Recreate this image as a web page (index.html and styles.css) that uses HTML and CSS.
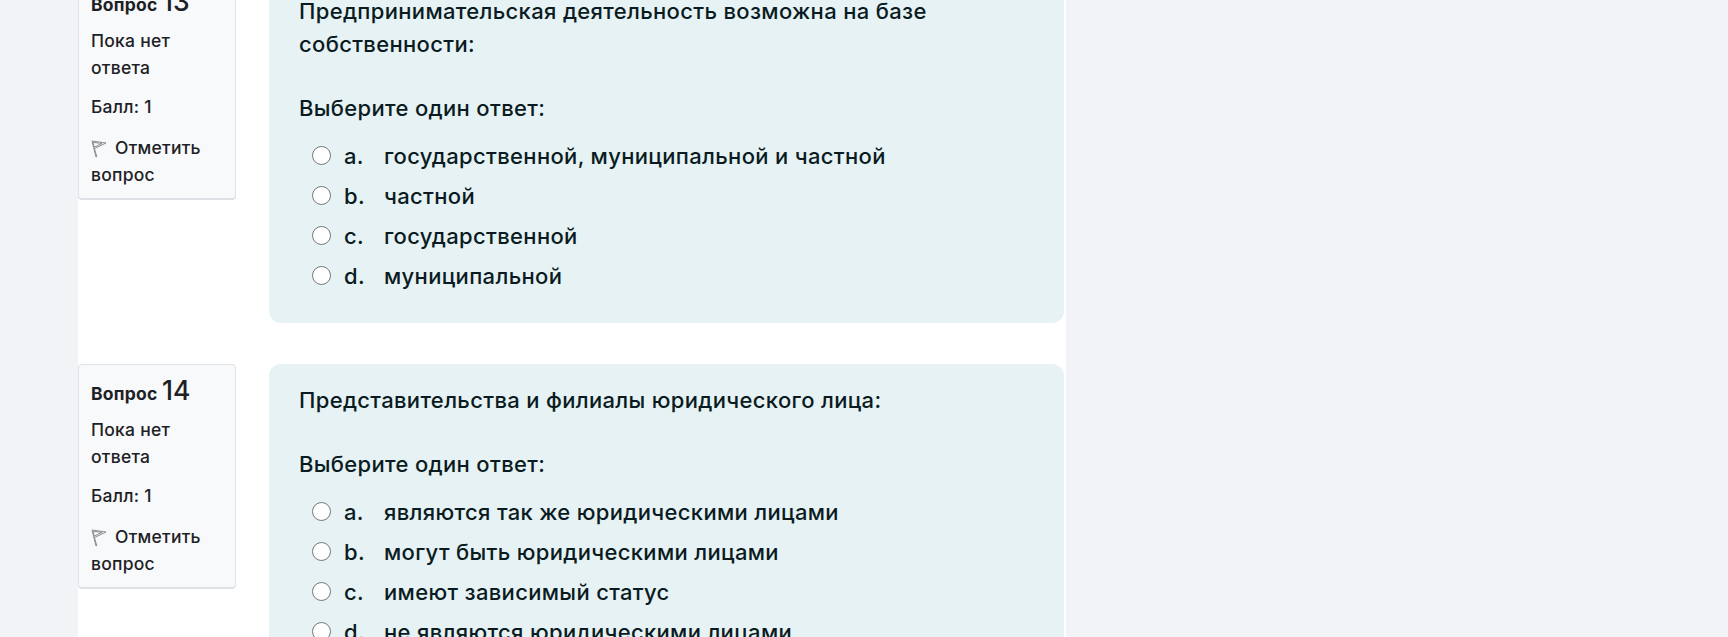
FILE: index.html
```html
<!DOCTYPE html>
<html lang="ru">
<head>
<meta charset="utf-8">
<title>Тест</title>
<link rel="stylesheet" href="styles.css">
</head>
<body>
<main class="panel">
  <section class="question first">
    <aside class="info">
      <h3 class="qno">Вопрос <span class="num">13</span></h3>
      <div class="state">Пока нет ответа</div>
      <div class="grade">Балл: 1</div>
      <div class="flag"><svg class="flag-icon" viewBox="0 0 16 18"><path d="M1 1 L5 17 L5.8 16.6 L3.4 8.6 L15 3 Z M2.2 2.4 L3.2 7.2 L11 3.4 Z" fill="none" stroke="#7d8287" stroke-width="0.9"/></svg>Отметить вопрос</div>
    </aside>
    <div class="content">
      <p class="qtext">Предпринимательская деятельность возможна на базе собственности:</p>
      <p class="prompt">Выберите один ответ:</p>
      <div class="answers">
        <label class="answer"><span class="radio"></span><span class="letter">a.</span><span>государственной, муниципальной и частной</span></label>
        <label class="answer"><span class="radio"></span><span class="letter">b.</span><span>частной</span></label>
        <label class="answer"><span class="radio"></span><span class="letter">c.</span><span>государственной</span></label>
        <label class="answer"><span class="radio"></span><span class="letter">d.</span><span>муниципальной</span></label>
      </div>
    </div>
  </section>
  <section class="question">
    <aside class="info">
      <h3 class="qno">Вопрос <span class="num">14</span></h3>
      <div class="state">Пока нет ответа</div>
      <div class="grade">Балл: 1</div>
      <div class="flag"><svg class="flag-icon" viewBox="0 0 16 18"><path d="M1 1 L5 17 L5.8 16.6 L3.4 8.6 L15 3 Z M2.2 2.4 L3.2 7.2 L11 3.4 Z" fill="none" stroke="#7d8287" stroke-width="0.9"/></svg>Отметить вопрос</div>
    </aside>
    <div class="content">
      <p class="qtext">Представительства и филиалы юридического лица:</p>
      <p class="prompt">Выберите один ответ:</p>
      <div class="answers">
        <label class="answer"><span class="radio"></span><span class="letter">a.</span><span>являются так же юридическими лицами</span></label>
        <label class="answer"><span class="radio"></span><span class="letter">b.</span><span>могут быть юридическими лицами</span></label>
        <label class="answer"><span class="radio"></span><span class="letter">c.</span><span>имеют зависимый статус</span></label>
        <label class="answer"><span class="radio"></span><span class="letter">d.</span><span>не являются юридическими лицами</span></label>
      </div>
    </div>
  </section>
</main>
</body>
</html>
```
FILE: styles.css
```css
* { box-sizing: border-box; }
html, body { margin: 0; height: 637px; overflow: hidden; }
body {
  background: #f1f3f7;
  font-family: "Inter", "Noto Sans", sans-serif;
  color: #1d2125;
}
.panel {
  margin-left: 78px;
  width: 988px;
  height: 637px;
  background: #fff;
  overflow: hidden;
}
.question {
  display: flex;
  align-items: flex-start;
  gap: 33px;
  margin-bottom: 41px;
}
.question.first { margin-top: -25px; }
.info {
  width: 158px;
  flex: none;
  padding: 12px 12px 10px;
  background: #f8f9fa;
  border: 1px solid #dee2e6;
  border-bottom-width: 2px;
  border-radius: 4px;
  font-size: 17.5px;
  font-weight: 450;
  line-height: 27px;
  letter-spacing: 0.25px;
}
.qno {
  margin: 0 0 9px;
  font-size: 17.5px;
  font-weight: 700;
  line-height: 27px;
}
.num { font-size: 26.5px; font-weight: 500; letter-spacing: 0; }
.state { margin-bottom: 12px; }
.grade { margin-bottom: 14px; }
.flag-icon { width: 16px; height: 18px; margin-right: 8px; vertical-align: -4px; }
.content {
  width: 795px;
  flex: none;
  padding: 20px 30px 30px 30px;
  background: #e7f2f4;
  border-radius: 12px;
  color: #0a1c22;
  font-size: 22px;
  font-weight: 500;
  line-height: 33px;
  letter-spacing: 0.33px;
}
.qtext { margin: 0 0 31px; }
.prompt { margin: 0 0 15px; }
.answers { display: flex; flex-direction: column; gap: 7px; }
.answer { display: flex; align-items: center; padding-left: 13px; }
.radio {
  width: 19px;
  height: 19px;
  flex: none;
  margin-right: 13px;
  margin-bottom: 2px;
  background: #fff;
  border: 1.5px solid #73777a;
  border-radius: 50%;
}
.letter { width: 40px; flex: none; }
```
